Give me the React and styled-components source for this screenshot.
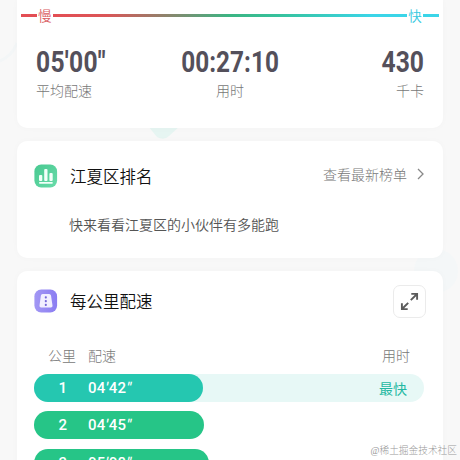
import React from "react";
import styled, { createGlobalStyle } from "styled-components";

const Global = createGlobalStyle`
  * { box-sizing: border-box; }
  html, body { margin: 0; height: 460px; overflow: hidden; }
  body { background: #f8f8f8; font-family: "Noto Sans CJK SC", sans-serif; }
`;

const Page = styled.main`
  position: relative;
  width: 460px;
  height: 460px;
  overflow: hidden;
  background: #f8f8f8;
`;

const Backdrop = styled.svg`
  position: absolute;
  inset: 0;
`;

const Stack = styled.div`
  position: relative;
  display: flex;
  flex-direction: column;
  gap: 13px;
  padding: 0 17px;
`;

const Card = styled.section`
  flex: none;
  height: ${(p) => p.$height}px;
  background: #fff;
  border-radius: ${(p) => (p.$open ? "0 0 10px 10px" : "10px")};
  box-shadow: 0 0 7px rgba(0, 0, 0, 0.025);
`;

const PaceScale = styled.div`
  display: flex;
  align-items: center;
  gap: 1px;
  height: 31px;
  padding: 0 4px;
`;

const Line = styled.span`
  height: 3px;
  width: ${(p) => p.$width}px;
  background: ${(p) => p.$fill};
`;

const ScaleLabel = styled.span`
  width: 14px;
  margin-top: -1px;
  font-size: 13.5px;
  font-weight: 350;
  line-height: 20px;
  color: ${(p) => p.$color};
`;

const Stats = styled.div`
  display: grid;
  grid-template-columns: 1fr 1fr 1fr;
  padding: 14px 19px 0 19px;
`;

const Stat = styled.div`
  display: flex;
  flex-direction: column;
  align-items: ${(p) => p.$align};
`;

const Figure = styled.strong`
  height: 35px;
  font: 700 29px/35px Roboto, sans-serif;
  letter-spacing: ${(p) => p.$spacing || 0}px;
  color: #54505b;
  white-space: nowrap;
  transform: scaleX(${(p) => p.$stretch || 0.85});
  transform-origin: ${(p) => p.$origin};
`;

const Caption = styled.span`
  font-size: 14px;
  line-height: 20px;
  font-weight: 300;
  color: #777;
`;

const Header = styled.header`
  display: flex;
  align-items: center;
  height: ${(p) => p.$height}px;
  padding: 0 17px;
`;

const Title = styled.h2`
  flex: 1;
  margin: 0 0 0 12px;
  font-size: 16.5px;
  line-height: 24px;
  font-weight: 350;
  color: #111;
`;

const MoreLink = styled.a`
  display: flex;
  align-items: center;
  gap: 8px;
  margin-top: -4px;
  font-size: 14px;
  line-height: 20px;
  font-weight: 300;
  color: #777;
`;

const Message = styled.p`
  margin: 2px 0 0 52px;
  font-size: 14px;
  font-weight: 350;
  line-height: 22px;
  color: #555;
`;

const ExpandButton = styled.button`
  display: flex;
  align-items: center;
  justify-content: center;
  width: 33px;
  height: 33px;
  padding: 0;
  border: 1px solid #ebebeb;
  border-radius: 7px;
  background: #fff;
`;

const Columns = styled.div`
  display: grid;
  grid-template-columns: 40px 1fr auto;
  padding: 13px 33px 0 31px;
  font-size: 14px;
  line-height: 20px;
  font-weight: 300;
  color: #777;
`;

const Laps = styled.div`
  display: flex;
  flex-direction: column;
  gap: 9.5px;
  padding: 9px 19px 0 17px;
`;

const Track = styled.div`
  display: flex;
  align-items: center;
  justify-content: space-between;
  height: 28px;
  border-radius: 14px;
  background: ${(p) => (p.$best ? "#e7f8f6" : "transparent")};
`;

const Bar = styled.div`
  display: grid;
  grid-template-columns: 33px 1fr;
  column-gap: 21px;
  width: ${(p) => p.$width}px;
  height: 28px;
  border-radius: 14px;
  background: ${(p) => (p.$best ? "#25c7b0" : "#26c587")};
  color: #fff;
  font: 500 15px/29px Roboto, sans-serif;
`;

const Index = styled.span`
  text-align: right;
`;

const Pace = styled.span`
  letter-spacing: 0.2px;
`;

const Mark = styled.i`
  display: inline-block;
  padding-left: 0.5px;
  transform: skewX(-10deg);
  font-style: normal;
`;

const Best = styled.span`
  padding-right: 17px;
  font-size: 14px;
  line-height: 20px;
  color: #25b8a2;
`;

const Watermark = styled.div`
  position: absolute;
  right: 3px;
  bottom: 1px;
  font: 300 9.7px/16px "Liberation Serif", "Noto Sans CJK SC", serif;
  color: #999;
  white-space: nowrap;
`;

const laps = [
  { minutes: "04", seconds: "42", width: 169, best: true },
  { minutes: "04", seconds: "45", width: 170 },
  { minutes: "05", seconds: "08", width: 175 },
];

function RankIcon() {
  return (
    <svg width="24" height="24" viewBox="0 0 24 24">
      <defs>
        <linearGradient id="rank" x2="1" y2="1">
          <stop stopColor="#48c991" />
          <stop offset="1" stopColor="#69dba9" />
        </linearGradient>
      </defs>
      <rect x=".4" y=".6" width="22.7" height="22.8" rx="6.8" fill="url(#rank)" />
      <g fill="#f2fff9">
        <rect x="5" y="11" width="3.3" height="6" rx="1" />
        <rect x="10.2" y="5" width="3.3" height="12" rx="1" />
        <rect x="15.4" y="9" width="3.3" height="8" rx="1" />
        <rect x="5" y="18" width="13.8" height="1.7" rx=".8" />
      </g>
    </svg>
  );
}

function RoadIcon() {
  return (
    <svg width="24" height="24" viewBox="0 0 24 24">
      <defs>
        <linearGradient id="road" x2="1">
          <stop stopColor="#a297f4" />
          <stop offset="1" stopColor="#8b7df2" />
        </linearGradient>
      </defs>
      <rect x=".4" y=".6" width="22.7" height="22.8" rx="6.8" fill="url(#road)" />
      <path d="M8.5 5h6.6q1.6 0 1.9 1.5l1.5 9.9q.3 2-1.7 2H7.2q-2 0-1.7-2l1.4-9.9q.2-1.5 1.6-1.5Z" fill="#f1efff" />
      <g fill="#7467d9">
        <rect x="10.8" y="7.2" width="2" height="2.3" rx=".8" />
        <rect x="10.8" y="11" width="2" height="2.3" rx=".8" />
        <rect x="10.8" y="14.8" width="2" height="2.3" rx=".8" />
      </g>
    </svg>
  );
}

export default function App() {
  return (
    <Page>
      <Global />
      <Backdrop width="460" height="460">
        <path d="M148 126h32l-11 10q-5 5-12 1Z" fill="#e6f5f2" />
        <circle cx="436" cy="271" r="22" fill="#f4f7f8" />
        <path d="M0 61q12-5 17-18" stroke="#f3f6f7" strokeWidth="3" fill="none" />
      </Backdrop>
      <Stack>
        <Card $height={128} $open>
          <PaceScale>
            <Line $width={16} $fill="#e34e54" />
            <ScaleLabel $color="#d95b60">慢</ScaleLabel>
            <Line $width={356} $fill="linear-gradient(90deg, #e34e54 0%, #db5557 15%, #3bb583 50%, #36c3a0 65%, #3bd5e8 90%)" />
            <ScaleLabel $color="#35c8e0">快</ScaleLabel>
            <Line $width={16} $fill="#3bd5e8" />
          </PaceScale>
          <Stats>
            <Stat $align="flex-start">
              <Figure $origin="left" $spacing={0.3}>05'00"</Figure>
              <Caption>平均配速</Caption>
            </Stat>
            <Stat $align="center">
              <Figure $origin="center" $stretch={0.84}>00:27:10</Figure>
              <Caption>用时</Caption>
            </Stat>
            <Stat $align="flex-end">
              <Figure $origin="right">430</Figure>
              <Caption>千卡</Caption>
            </Stat>
          </Stats>
        </Card>
        <Card $height={116.5}>
          <Header $height={70}>
            <RankIcon />
            <Title>江夏区排名</Title>
            <MoreLink>
              查看最新榜单
              <svg width="11" height="14" viewBox="0 0 11 14" fill="none" stroke="#888" strokeWidth="1.3">
                <path d="m3 2 5 5-5 5" />
              </svg>
            </MoreLink>
          </Header>
          <Message>快来看看江夏区的小伙伴有多能跑</Message>
        </Card>
        <Card $height={260}>
          <Header $height={61}>
            <RoadIcon />
            <Title>每公里配速</Title>
            <ExpandButton aria-label="展开">
              <svg width="19" height="19" viewBox="0 0 19 19" fill="none" stroke="#5c5c5c" strokeWidth="1.9">
                <path d="M10.8 8.2 17 2M11.3 1.9h5.8v5.8M8.2 10.8 2 17M1.9 11.3v5.8h5.8" />
              </svg>
            </ExpandButton>
          </Header>
          <Columns>
            <span>公里</span>
            <span>配速</span>
            <span>用时</span>
          </Columns>
          <Laps>
            {laps.map((lap, i) => (
              <Track key={i} $best={lap.best}>
                <Bar $width={lap.width} $best={lap.best}>
                  <Index>{i + 1}</Index>
                  <Pace>
                    {lap.minutes}
                    <Mark>′</Mark>
                    {lap.seconds}
                    <Mark>″</Mark>
                  </Pace>
                </Bar>
                {lap.best && <Best>最快</Best>}
              </Track>
            ))}
          </Laps>
        </Card>
      </Stack>
      <Watermark>@稀土掘金技术社区</Watermark>
    </Page>
  );
}
